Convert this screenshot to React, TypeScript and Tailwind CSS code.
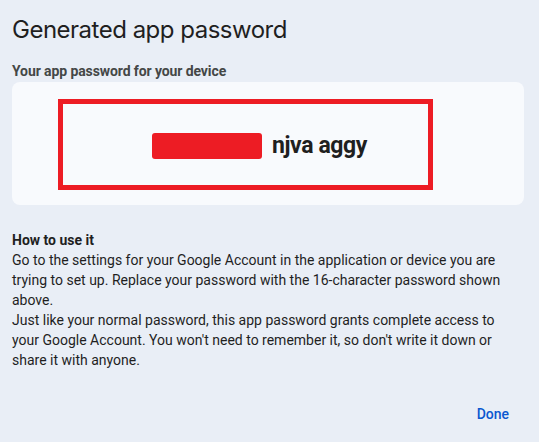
export default function App() {
  return (
    <div className="w-[539px] h-[442px] bg-[#e9eef6] text-[#1f1f1f] font-['Roboto','Liberation_Sans',sans-serif] flex flex-col overflow-hidden">
      {/* Title */}
      <h1 className="px-3 pt-[14px] h-[44px] text-[24px] leading-[32px] font-normal font-['Inter','Roboto',sans-serif] tracking-[-0.5px]">
        Generated app password
      </h1>

      <div className="pl-3 pr-[15px] pt-[19px]">
        <div className="text-[14px] leading-[16px] font-bold text-[#444746] tracking-[-0.1px]">Your app password for your device</div>

        {/* Password card */}
        <div className="mt-[3px] h-[123px] rounded-lg bg-[#f8fafd] pt-[17px] pl-[46px]">
          <div className="w-[375px] h-[91px] border-[5px] border-[#ed1c24] flex items-center">
            <div className="flex items-center pl-[89px] pt-[2px]">
              <span className="inline-block w-[110px] h-[26px] bg-[#ed1c24] rounded-[3px]" />
              <span className="ml-[10px] text-[23px] leading-[24px] font-bold tracking-[-0.4px] text-[#1f1f1f]">njva aggy</span>
            </div>
          </div>
        </div>
      </div>

      {/* How to use */}
      <div className="pl-3 w-[507px] pt-[25px] text-[14px] leading-[20px] text-[#1f1f1f]">
        <div className="font-bold">How to use it</div>
        <p>
          Go to the settings for your Google Account in the application or device you are trying to set up. Replace
          your password with the 16-character password shown above.
        </p>
        <p>
          Just like your normal password, this app password grants complete access to your Google Account. You won't
          need to remember it, so don't write it down or share it with anyone.
        </p>
      </div>

      <div className="flex justify-end pr-[30px] pt-[34px]">
        <button className="text-[14px] leading-[20px] font-medium text-[#0b57d0]">Done</button>
      </div>
    </div>
  )
}
